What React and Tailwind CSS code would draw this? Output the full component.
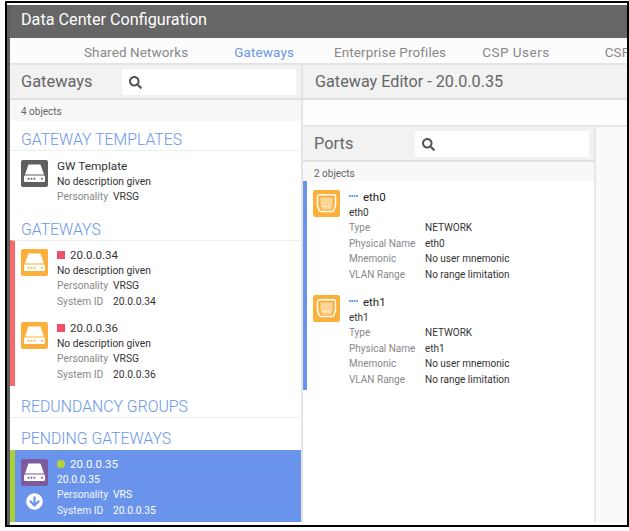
import React from "react";
import { FaSearch, FaArrowCircleDown } from "react-icons/fa";

const gateways = [
  { ip: "20.0.0.34" },
  { ip: "20.0.0.36" },
];

const ports = ["eth0", "eth1"];

function GatewayIcon({ color, dot }) {
  return (
    <div className={`w-[27px] h-[27px] rounded-[2px] shrink-0 ${color}`}>
      <svg viewBox="0 0 27 27" className="w-[27px] h-[27px]" fill="none">
        <path d="M7.5 4.5h12l3.5 10H4z" fill="#fff" />
        <rect x="3" y="15.5" width="21" height="6.5" rx="1.2" fill="#fff" />
        <circle cx="7.5" cy="18.8" r="1" fill={dot} />
        <circle cx="10.5" cy="18.8" r="1" fill={dot} />
        <circle cx="13.5" cy="18.8" r="1" fill={dot} />
        <circle cx="21" cy="18.8" r="1" fill={dot} />
      </svg>
    </div>
  );
}

function PortIcon() {
  return (
    <div className="w-[27px] h-[27px] rounded-[2px] shrink-0 bg-[#fbb03b]">
      <svg viewBox="0 0 27 27" className="w-[27px] h-[27px]" fill="none">
        <path
          d="M6.5 4.7h14a2 2 0 0 1 2 2v8.5l-1.6 5a2 2 0 0 1-2 1.3H8.1a2 2 0 0 1-2-1.3l-1.600-5V6.700a2 2 0 0 1 2-2z"
          stroke="#fff"
          strokeWidth="1.5"
        />
        <path d="M7.500 7.500h12v7.500l-1.500 4.500H9L7.500 15z" fill="#fdd596" />
        <path d="M10 16.500h7" stroke="#fff" strokeWidth="1.2" strokeDasharray="1.2 1.2" />
      </svg>
    </div>
  );
}

function PortDots() {
  return (
    <svg viewBox="0 0 9 2" className="w-[9px] h-[2px] mr-[5px] mb-[3px] shrink-0">
      <rect x="0" width="1.6" height="2" fill="#4a9cf5" />
      <rect x="2.4" width="1.6" height="2" fill="#4a9cf5" />
      <rect x="4.8" width="1.6" height="2" fill="#4a9cf5" />
      <rect x="7.2" width="1.6" height="2" fill="#4a9cf5" />
    </svg>
  );
}

function SearchBox() {
  return (
    <div className="w-[174px] h-[26px] mt-px bg-white flex items-center pl-[7px]">
      <FaSearch className="text-[#555] text-[13px]" />
    </div>
  );
}

function SectionTitle({ children, className = "" }) {
  return (
    <div className={`shrink-0 pl-[11px] text-[15.800px] leading-[21px] text-[#6c96ea] font-light ${className}`}>
      {children}
    </div>
  );
}

function Meta({ label, value, selected }) {
  return (
    <div className="flex gap-[6px] h-[15.4px] items-center">
      <span className={`w-[50px] whitespace-nowrap ${selected ? "text-white/90" : "text-[#888]"}`}>{label}</span>
      <span className={selected ? "text-white" : "text-[#333]"}>{value}</span>
    </div>
  );
}

function PortRow({ name }) {
  const rows = [
    ["Type", "NETWORK"],
    ["Physical Name", name],
    ["Mnemonic", "No user mnemonic"],
    ["VLAN Range", "No range limitation"],
  ];
  return (
    <div className="flex gap-[9px] pl-[6px] h-[105px] pt-[9px]">
      <PortIcon />
      <div className="text-[10px] leading-[15.4px] text-[#333]">
        <div className="flex items-center h-[15px] text-[11.500px] text-[#222]">
          <PortDots />
          {name}
        </div>
        <div>{name}</div>
        {rows.map(([k, v]) => (
          <div key={k} className="flex">
            <span className="w-[76px] text-[#888]">{k}</span>
            <span>{v}</span>
          </div>
        ))}
      </div>
    </div>
  );
}

export default function App() {
  return (
    <div className="w-[629px] h-[531px] bg-white pl-[5px] pt-px font-['Roboto',sans-serif]">
      <div className="w-[624px] h-[526px] border-2 border-black pt-[2px] flex flex-col">
        <div className="flex-1 min-h-0 flex flex-col border-l-[3px] border-[#5f5f5f] overflow-hidden">
          <div className="h-[33px] shrink-0 bg-[#666] text-white text-[16.200px] flex items-center pl-[11px] pb-[3px]">
            Data Center Configuration
          </div>
          <div className="h-[27px] shrink-0 bg-[#fcfcfc] border-b-2 border-[#e4e4e4] flex items-center pt-[3px] text-[13.500px] tracking-[0.1px] text-[#888] whitespace-nowrap overflow-hidden">
            <span className="ml-[74px]">Shared Networks</span>
            <span className="ml-[46px] text-[#6c96ea]">Gateways</span>
            <span className="ml-[40px]">Enterprise Profiles</span>
            <span className="ml-[36px] tracking-[0.5px]">CSP Users</span>
            <span className="ml-[55px]">CSP Roles</span>
          </div>

          <div className="flex-1 min-h-0 flex">
            {/* left list */}
            <div className="w-[293px] shrink-0 border-r-2 border-[#e4e4e4] flex flex-col">
              <div className="h-[35px] shrink-0 bg-[#f2f2f2] border-b-2 border-[#e0e0e0] flex items-center justify-between pl-[11px] pr-[5px] text-[#666] text-[16.400px]">
                <span className="pt-[2px]">Gateways</span>
                <SearchBox />
              </div>
              <div className="h-[21px] shrink-0 bg-[#f8f8f8] pl-[11px] pt-px text-[10px] leading-[21px] text-[#666]">
                4 objects
              </div>
              <SectionTitle className="mt-[8px]">GATEWAY TEMPLATES</SectionTitle>
              <div className="shrink-0 border-t border-[#eee] h-[69px] pt-[9px] pl-[11px] flex gap-[9px] text-[10.300px] text-[#333]">
                <GatewayIcon color="bg-[#5f5f5f]" dot="#5f5f5f" />
                <div className="-mt-px">
                  <div className="text-[11.800px] leading-[15px]">GW Template</div>
                  <div className="h-[15.4px]">No description given</div>
                  <Meta label="Personality" value="VRSG" />
                </div>
              </div>
              <SectionTitle>GATEWAYS</SectionTitle>
              <div className="shrink-0 border-t border-[#eee] border-l-[5px] border-l-[#f96a6a] h-[146px] text-[10.300px] text-[#333]">
                {gateways.map((g) => (
                  <div key={g.ip} className="flex gap-[9px] pl-[6px] pt-[8px] h-[73px]">
                    <GatewayIcon color="bg-[#fbb03b]" dot="#fbb03b" />
                    <div className="-mt-px">
                      <div className="flex items-center h-[15px] text-[11.500px]">
                        <span className="w-[8px] h-[8px] bg-[#f0506e] mr-[5px] mb-[2px]" />
                        {g.ip}
                      </div>
                      <div className="h-[15.4px]">No description given</div>
                      <Meta label="Personality" value="VRSG" />
                      <Meta label="System ID" value={g.ip} />
                    </div>
                  </div>
                ))}
              </div>
              <SectionTitle className="mt-[10px]">REDUNDANCY GROUPS</SectionTitle>
              <div className="shrink-0 border-t border-[#eee]" />
              <SectionTitle className="mt-[10px]">PENDING GATEWAYS</SectionTitle>
              <div className="shrink-0 mt-px h-[72px] bg-[#6a94eb] border-l-[5px] border-[#a9d03b] flex gap-[9px] pl-[6px] pt-[9px] text-[10.300px] text-white">
                <div className="flex flex-col items-center">
                  <GatewayIcon color="bg-[#7d5a9b]" dot="#7d5a9b" />
                  <FaArrowCircleDown className="text-white text-[17px] mt-[7px]" />
                </div>
                <div className="-mt-[2px]">
                  <div className="flex items-center h-[15px] text-[11.500px]">
                    <span className="w-[8px] h-[8px] rounded-full bg-[#b5d334] mr-[5px] mb-[2px]" />
                    20.0.0.35
                  </div>
                  <div className="h-[15.4px]">20.0.0.35</div>
                  <Meta label="Personality" value="VRS" selected />
                  <Meta label="System ID" value="20.0.0.35" selected />
                </div>
              </div>
            </div>

            {/* editor */}
            <div className="flex-1 min-w-0 flex flex-col">
              <div className="h-[35px] shrink-0 bg-[#f2f2f2] border-b-2 border-[#e0e0e0] flex items-center pl-[12px] text-[#666] text-[16.200px]">
                <span className="pt-[2px]">Gateway Editor - 20.0.0.35</span>
              </div>
              <div className="h-[27px] shrink-0 bg-[#fdfdfd] border-b-2 border-[#e8e8e8]" />
              <div className="flex-1 min-h-0 flex">
                <div className="w-[293px] shrink-0 border-r-2 border-[#e8e8e8] flex flex-col">
                  <div className="h-[35px] shrink-0 bg-[#f2f2f2] border-b-2 border-[#e0e0e0] flex items-center justify-between pl-[11px] pr-[5px] text-[#666] text-[16.400px]">
                    <span className="pt-[2px]">Ports</span>
                    <SearchBox />
                  </div>
                  <div className="h-[19px] shrink-0 bg-[#f8f8f8] pl-[11px] pt-[2px] text-[10px] leading-[19px] text-[#666]">
                    2 objects
                  </div>
                  <div className="shrink-0 border-l-[4px] border-[#6a94eb] h-[209px]">
                    {ports.map((p) => (
                      <PortRow key={p} name={p} />
                    ))}
                  </div>
                </div>
                <div className="flex-1 bg-[#fafafa]" />
              </div>
            </div>
          </div>
          <div className="h-[3px] shrink-0 bg-white" />
        </div>
      </div>
    </div>
  );
}
